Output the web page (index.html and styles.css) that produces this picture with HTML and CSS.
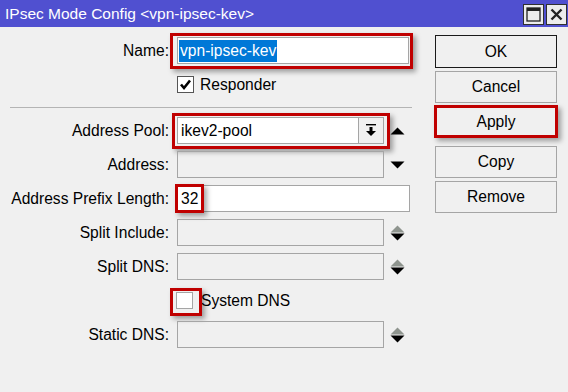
FILE: index.html
```html
<!DOCTYPE html>
<html>
<head>
<meta charset="utf-8">
<link rel="stylesheet" href="styles.css">
</head>
<body>
<div class="window">
  <div class="titlebar">
    <span class="title">IPsec Mode Config &lt;vpn-ipsec-kev&gt;</span>
    <div class="tb-btns">
      <span class="tb-btn"><svg width="15" height="15" viewBox="0 0 15 15"><rect x="1" y="1" width="13" height="13" fill="none" stroke="#222" stroke-width="1.3"/><rect x="1" y="1" width="13" height="3" fill="#222"/></svg></span>
      <span class="tb-btn"><svg width="15" height="15" viewBox="0 0 15 15"><path d="M2.5 2.5 L12.5 12.5 M12.5 2.5 L2.5 12.5" stroke="#222" stroke-width="2.4"/></svg></span>
    </div>
  </div>
  <div class="content">
    <div class="form">
      <div class="row">
        <span class="lbl">Name:</span>
        <div class="field w-long">
          <div class="input white"><span class="sel">vpn-ipsec-kev</span></div>
          <span class="hl hl-name"></span>
        </div>
      </div>
      <div class="row">
        <span class="lbl"></span>
        <div class="check">
          <span class="box dark"><svg width="15" height="15" viewBox="0 0 15 15"><path d="M3 7.5 L6 11 L12 3.5" fill="none" stroke="#000" stroke-width="2.6"/></svg></span>
          <span class="check-text">Responder</span>
        </div>
      </div>
      <div class="sep"></div>
      <div class="row">
        <span class="lbl">Address Pool:</span>
        <div class="field w-short">
          <div class="input white combo">
            <span class="val">ikev2-pool</span>
            <span class="dd"><svg width="12" height="14" viewBox="0 0 12 14"><rect x="1" y="0" width="10" height="1.4" fill="#000"/><rect x="4.5" y="3" width="3" height="4" fill="#000"/><path d="M1 7 L11 7 L6 12 Z" fill="#000"/></svg></span>
          </div>
          <span class="hl hl-pool"></span>
        </div>
        <div class="spin">
          <svg width="15" height="8" viewBox="0 0 15 8"><path d="M0.5 7.5 L7.5 0.5 L14.5 7.5 Z" fill="#000"/></svg>
        </div>
      </div>
      <div class="row">
        <span class="lbl">Address:</span>
        <div class="field w-short"><div class="input"></div></div>
        <div class="spin">
          <svg width="15" height="8" viewBox="0 0 15 8"><path d="M0.5 0.5 L14.5 0.5 L7.5 7.5 Z" fill="#000"/></svg>
        </div>
      </div>
      <div class="row">
        <span class="lbl">Address Prefix Length:</span>
        <div class="field w-prefix">
          <div class="input white"><span class="val">32</span></div>
          <span class="hl hl-prefix"></span>
        </div>
      </div>
      <div class="row">
        <span class="lbl">Split Include:</span>
        <div class="field w-short"><div class="input"></div></div>
        <div class="spin">
          <svg width="15" height="8" viewBox="0 0 15 8"><path d="M0.5 7.5 L7.5 0.5 L14.5 7.5 Z" fill="#8e948e"/></svg>
          <svg width="15" height="8" viewBox="0 0 15 8"><path d="M0.5 0.5 L14.5 0.5 L7.5 7.5 Z" fill="#000"/></svg>
        </div>
      </div>
      <div class="row">
        <span class="lbl">Split DNS:</span>
        <div class="field w-short"><div class="input"></div></div>
        <div class="spin">
          <svg width="15" height="8" viewBox="0 0 15 8"><path d="M0.5 7.5 L7.5 0.5 L14.5 7.5 Z" fill="#8e948e"/></svg>
          <svg width="15" height="8" viewBox="0 0 15 8"><path d="M0.5 0.5 L14.5 0.5 L7.5 7.5 Z" fill="#000"/></svg>
        </div>
      </div>
      <div class="row">
        <span class="lbl"></span>
        <div class="check">
          <span class="box light"><span class="hl hl-sys"></span></span>
          <span class="check-text tight">System DNS</span>
        </div>
      </div>
      <div class="row">
        <span class="lbl">Static DNS:</span>
        <div class="field w-short"><div class="input"></div></div>
        <div class="spin">
          <svg width="15" height="8" viewBox="0 0 15 8"><path d="M0.5 7.5 L7.5 0.5 L14.5 7.5 Z" fill="#8e948e"/></svg>
          <svg width="15" height="8" viewBox="0 0 15 8"><path d="M0.5 0.5 L14.5 0.5 L7.5 7.5 Z" fill="#000"/></svg>
        </div>
      </div>
    </div>
    <div class="buttons">
      <div class="btn default">OK</div>
      <div class="btn">Cancel</div>
      <div class="btn">Apply<span class="hl hl-apply"></span></div>
      <div class="btn spaced">Copy</div>
      <div class="btn">Remove</div>
    </div>
  </div>
</div>
</body>
</html>
```

FILE: styles.css
```css
html, body {
  margin: 0;
  padding: 0;
  width: 568px;
  height: 392px;
  overflow: hidden;
  background: #f0f0f0;
  font-family: "Liberation Sans", Arial, sans-serif;
  color: #000;
}

.window {
  width: 568px;
  height: 392px;
  display: flex;
  flex-direction: column;
}

.titlebar {
  height: 27px;
  flex: none;
  background: #5050d0;
  display: flex;
  align-items: center;
  justify-content: space-between;
  padding: 0 1px 0 5px;
}

.title {
  color: #fff;
  font-size: 15.5px;
}

.tb-btns {
  display: flex;
  gap: 2px;
  margin-top: 1px;
}

.tb-btn {
  width: 21px;
  height: 21px;
  box-sizing: border-box;
  border: 1px solid #303030;
  background: #ececec;
  display: flex;
  align-items: center;
  justify-content: center;
}

.content {
  display: flex;
  flex: 1;
}

.form {
  width: 435px;
  flex: none;
  padding-top: 10px;
  display: flex;
  flex-direction: column;
  gap: 7px;
}

.row {
  display: flex;
  align-items: center;
  height: 27px;
  font-size: 15.6px;
}

.lbl {
  width: 169px;
  margin-right: 8px;
  flex: none;
  text-align: right;
  white-space: nowrap;
}

.field {
  position: relative;
  height: 27px;
  flex: none;
}

.w-long { width: 232px; }
.w-prefix { width: 233px; }
.w-short { width: 207px; }

.input {
  height: 27px;
  box-sizing: border-box;
  border: 1px solid #a5a5a5;
  display: flex;
  align-items: center;
  padding-left: 1px;
}

.input.white { background: #fff; }

.sel {
  background: #0078d7;
  color: #fff;
  padding: 1px 1px 2px 1px;
  line-height: 19px;
}

.val {
  padding-left: 2px;
  flex: 1;
}

.combo {
  padding-right: 0;
}

.dd {
  width: 25px;
  height: 25px;
  box-sizing: border-box;
  border-left: 1px solid #a5a5a5;
  background: #f0f0f0;
  display: flex;
  align-items: center;
  justify-content: center;
}

.spin {
  width: 15px;
  margin-left: 6px;
  display: flex;
  flex-direction: column;
  align-items: center;
  justify-content: center;
  gap: 0;
}

.spin svg { display: block; }

.check {
  display: flex;
  align-items: center;
}

.box {
  position: relative;
  width: 17px;
  height: 17px;
  box-sizing: border-box;
  background: #fff;
  display: flex;
  align-items: center;
  justify-content: center;
}

.box.dark { border: 1px solid #555; }
.box.light { border: 1px solid #a5a5a5; margin-left: -1px; }

.check-text { margin-left: 6px; }
.check-text.tight { margin-left: 8px; }

.sep {
  height: 1px;
  background: #b4b4b4;
  margin: 2px 23px 2px 10px;
}

.hl {
  position: absolute;
  border: 3px solid #c00000;
  box-shadow: 3px 3px 5px rgba(0, 0, 0, 0.35);
  pointer-events: none;
}

.hl-name { left: -7px; right: -4px; top: -4px; bottom: -5px; }
.hl-pool { left: -5px; right: -6px; top: -4px; bottom: -5px; }
.hl-prefix { left: -2px; top: -1px; width: 23px; height: 23px; }
.hl-sys { left: -7px; top: -5px; width: 26px; height: 22px; }
.hl-apply { left: -2px; right: -2px; top: -2px; bottom: -1px; }

.buttons {
  width: 122px;
  padding-top: 8px;
  display: flex;
  flex-direction: column;
  gap: 3px;
}

.btn {
  position: relative;
  height: 32px;
  box-sizing: border-box;
  border: 1px solid #a5a5a5;
  background: #f0f0f0;
  display: flex;
  align-items: center;
  justify-content: center;
  font-size: 15.6px;
}

.btn.default {
  height: 33px;
  border-color: #1a1a1a;
}

.btn.spaced { margin-top: 5px; }
```
